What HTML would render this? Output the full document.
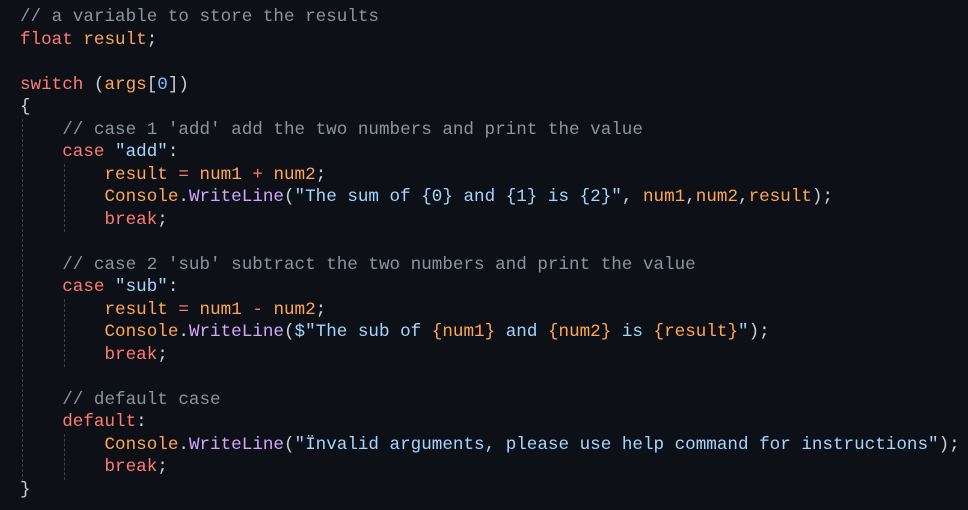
<!DOCTYPE html>
<html><head><style>
html,body{margin:0;padding:0;background:#0d1117;width:968px;height:510px;overflow:hidden}
pre{margin:0;position:absolute;left:20px;top:6px;font-family:"Liberation Mono",monospace;font-size:17.6px;line-height:22.5px;color:#c9d1d9}
.c{color:#8b949e}.k{color:#ff7b72}.v{color:#ffa657}.s{color:#a5d6ff}.m{color:#d2a8ff}.n{color:#79c0ff}
.g{position:absolute;border-left:1px dashed #3b414a;width:0}
</style></head><body>
<div class="g" style="left:22px;top:119px;height:363px"></div>
<div class="g" style="left:64px;top:164px;height:68px"></div>
<div class="g" style="left:64px;top:299px;height:68px"></div>
<div class="g" style="left:64px;top:434px;height:46px"></div>
<pre><span class="c">// a variable to store the results</span>
<span class="k">float</span> <span class="v">result</span>;

<span class="k">switch</span> (<span class="v">args</span>[<span class="n">0</span>])
{
    <span class="c">// case 1 'add' add the two numbers and print the value</span>
    <span class="k">case</span> <span class="s">"add"</span>:
        <span class="v">result</span> <span class="k">=</span> <span class="v">num1</span> <span class="k">+</span> <span class="v">num2</span>;
        <span class="v">Console</span>.<span class="m">WriteLine</span>(<span class="s">"The sum of {0} and {1} is {2}"</span>, <span class="v">num1</span>,<span class="v">num2</span>,<span class="v">result</span>);
        <span class="k">break</span>;

    <span class="c">// case 2 'sub' subtract the two numbers and print the value</span>
    <span class="k">case</span> <span class="s">"sub"</span>:
        <span class="v">result</span> <span class="k">=</span> <span class="v">num1</span> <span class="k">-</span> <span class="v">num2</span>;
        <span class="v">Console</span>.<span class="m">WriteLine</span>(<span class="s">$"The sub of </span><span class="v">{num1}</span><span class="s"> and </span><span class="v">{num2}</span><span class="s"> is </span><span class="v">{result}</span><span class="s">"</span>);
        <span class="k">break</span>;

    <span class="c">// default case</span>
    <span class="k">default</span>:
        <span class="v">Console</span>.<span class="m">WriteLine</span>(<span class="s">"Ïnvalid arguments, please use help command for instructions"</span>);
        <span class="k">break</span>;
}</pre>
</body></html>
